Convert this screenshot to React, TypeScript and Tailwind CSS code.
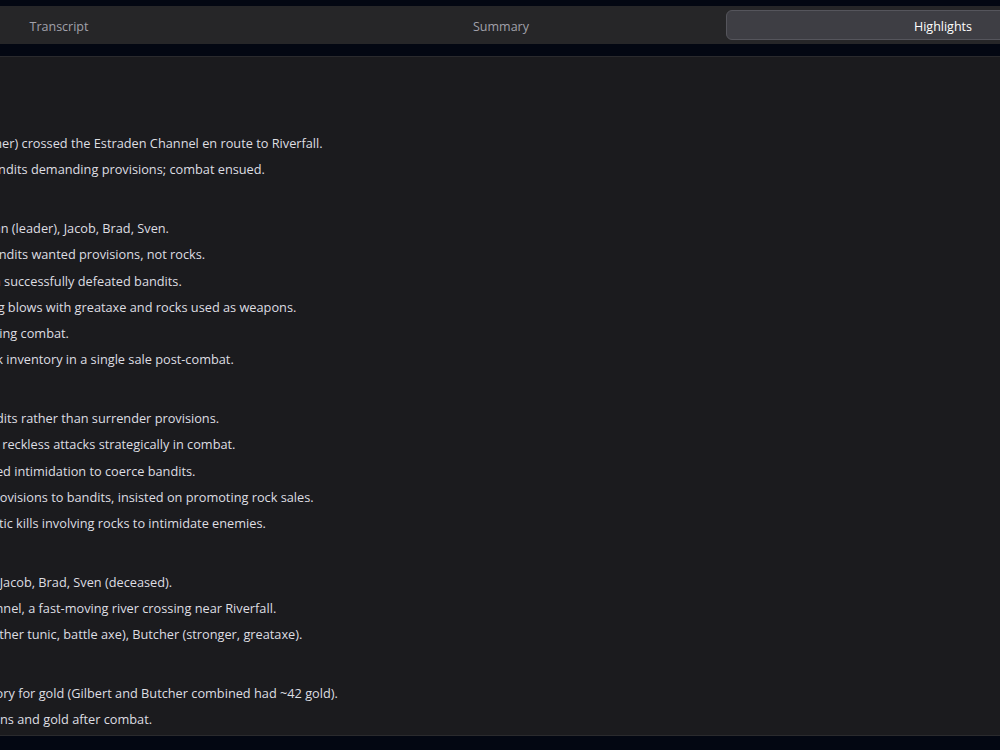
import React from 'react';

interface Section {
  title: string;
  items: string[];
}

const sections: Section[] = [
  {
    title: 'Key Events',
    items: [
      'Gilbert and Butcher (owner) crossed the Estraden Channel en route to Riverfall.',
      'Party was stopped by bandits demanding provisions; combat ensued.',
    ],
  },
  {
    title: 'Combat',
    items: [
      'Hostile bandit crew: Ethan (leader), Jacob, Brad, Sven.',
      'Rock sale pitch failed; bandits wanted provisions, not rocks.',
      'Gilbert and Butcher both successfully defeated bandits.',
      'Butcher landed the killing blows with greataxe and rocks used as weapons.',
      'Gilbert got wounded during combat.',
      'Gilbert sold all of his rock inventory in a single sale post-combat.',
    ],
  },
  {
    title: 'Decisions',
    items: [
      'Decided to fight the bandits rather than surrender provisions.',
      'Gilbert deliberately used reckless attacks strategically in combat.',
      'Butcher initially attempted intimidation to coerce bandits.',
      'Gilbert would not give provisions to bandits, insisted on promoting rock sales.',
      'Butcher favoured dramatic kills involving rocks to intimidate enemies.',
    ],
  },
  {
    title: 'NPCs & Places',
    items: [
      'Bandit members: Ethan, Jacob, Brad, Sven (deceased).',
      'Locations: Estraden Channel, a fast-moving river crossing near Riverfall.',
      'Protagonists: Gilbert (leather tunic, battle axe), Butcher (stronger, greataxe).',
    ],
  },
  {
    title: 'Loot',
    items: [
      'Traded their rock inventory for gold (Gilbert and Butcher combined had ~42 gold).',
      'Recovered bandit weapons and gold after combat.',
    ],
  },
];

const tabs = ['Transcript', 'Summary', 'Highlights'];

const App: React.FC = () => {
  const active = 'Highlights';

  return (
    <div className="h-[750px] overflow-hidden bg-gray-950 font-['Open_Sans',sans-serif]">
      <div className="ml-[-162px] w-[1326px] pt-1.5">
        <div className="grid h-[38px] grid-cols-3 gap-2 rounded-lg bg-[#262628] p-1 text-[12.5px]">
          {tabs.map((tab) => (
            <button
              key={tab}
              className={
                tab === active
                  ? 'rounded-md border border-[#55555c] bg-[#3e3e44] pt-[5px] text-white'
                  : 'rounded-md pt-[5px] text-[#a1a1aa]'
              }
            >
              {tab}
            </button>
          ))}
        </div>

        <div className="mt-3 rounded-lg border border-[#2a2a2d] bg-[#1b1b1e] px-[14px] pt-[49px] pb-[2px] text-[12.75px]">
          <div className="flex flex-col gap-[8.5px]">
            {sections.map((section) => (
              <div key={section.title}>
                <h3 className="mb-1 text-[13px] leading-5 font-semibold text-zinc-100">{section.title}</h3>
                <ul>
                  {section.items.map((item) => (
                    <li key={item} className="leading-[26.25px] text-[#dedee2]">
                      {item}
                    </li>
                  ))}
                </ul>
              </div>
            ))}
          </div>
        </div>
      </div>
    </div>
  );
};

export default App;
